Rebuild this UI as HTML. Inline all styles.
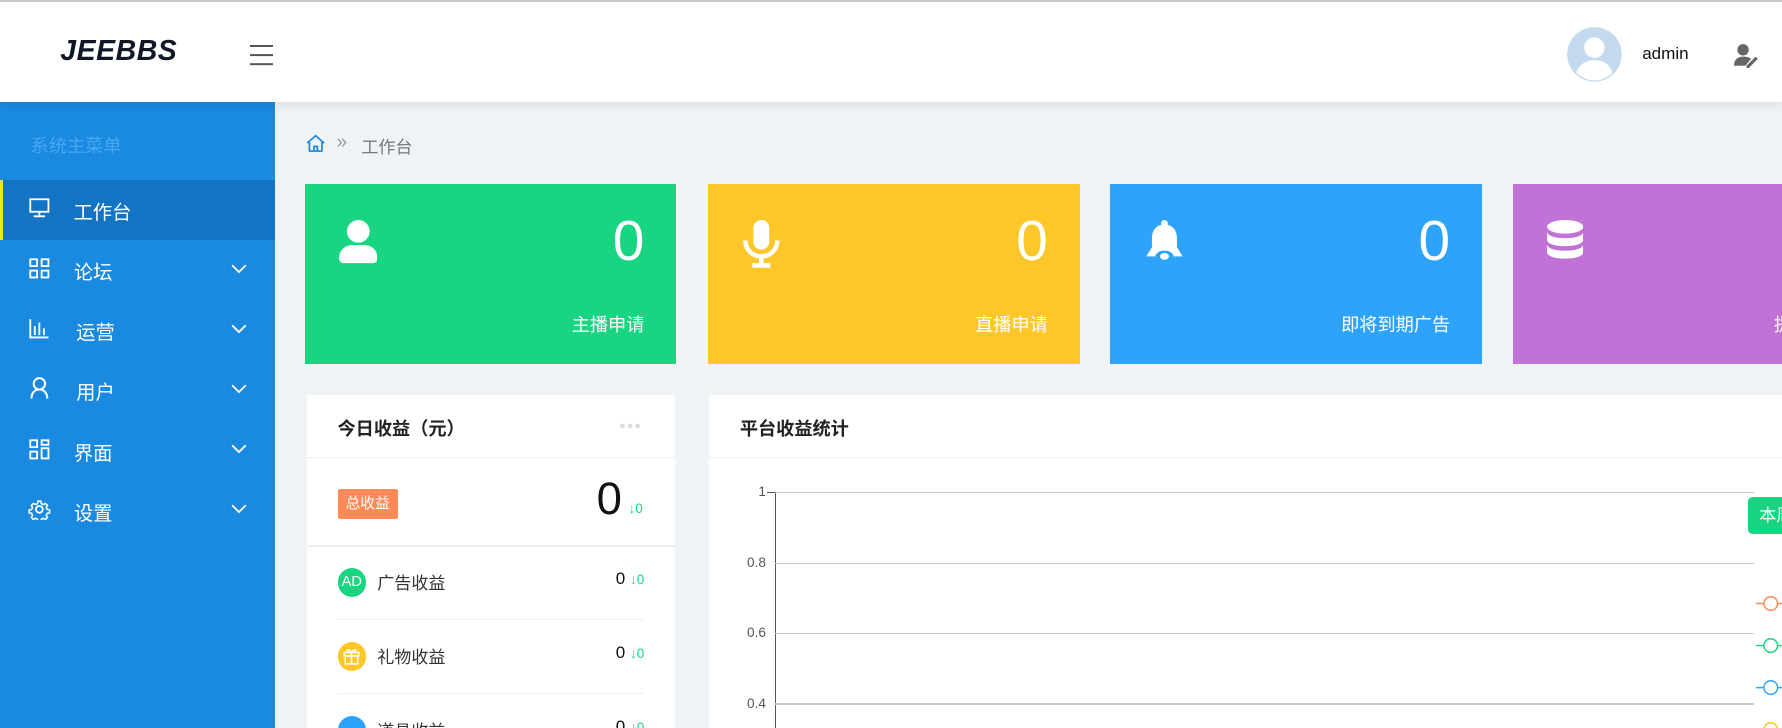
<!DOCTYPE html>
<html><head><meta charset="utf-8"><style>
*{margin:0;padding:0;box-sizing:border-box}
html,body{width:1782px;height:728px;overflow:hidden;background:#f0f3f6}
#w{zoom:1.13648;width:1568px;height:641px;position:relative;overflow:hidden;font-family:"Liberation Sans","Noto Sans CJK SC",sans-serif;background:#f0f3f6}
.a{position:absolute}
.hd{left:0;top:0;width:1568px;height:90px;background:#fff;border-top:2px solid #c8c8c8;box-shadow:0 2px 8px rgba(0,0,0,.1);z-index:2}
.sb{left:0;top:90px;width:242px;height:560px;background:#1a89e0}
.it{position:absolute;left:0;width:242px;height:53px;color:#fff;font-size:17px}
.it span{position:absolute;left:65px;top:15px}
.it svg.ic{position:absolute;left:25px;top:15px}
.it svg.ch{position:absolute;left:203px;top:20px}
.card{top:162px;width:327px;height:158px;color:#fff}
.card .n{position:absolute;right:28px;top:22px;font-size:50px;font-weight:300}
.card .l{position:absolute;right:28px;top:112px;font-size:16px}
.card svg{position:absolute;left:30px;top:32px}
.pn{background:#fff;top:348px;height:300px}
.ttl{position:absolute;top:17px;font-size:16px;font-weight:bold;color:#222}
.hr{position:absolute;height:1px;background:#eceff2}
.row{position:absolute;left:27px;width:270px;height:30px;font-size:15px;color:#333}
.row .c{position:absolute;left:0;top:0;width:25px;height:25px;border-radius:50%;color:#fff;font-size:13px;text-align:center;line-height:25px}
.row .t{position:absolute;left:35px;top:1px}
.row .v{position:absolute;right:0;top:1px;color:#111}
.row .v i{font-style:normal;color:#19d581;font-size:12px}
.yl{position:absolute;width:40px;text-align:right;font-size:12px;color:#555}
.gl{position:absolute;left:682px;width:861px;height:1px;background:#c8c8c8}
</style></head><body><div id="w">
<div class="a hd">
 <div class="a" style="left:53px;top:29px;font-size:25px;font-weight:bold;font-style:italic;color:#101828;letter-spacing:0.5px">JEEBBS</div>
 <div class="a" style="left:220px;top:38px;width:20px;height:2px;background:#555;box-shadow:0 8px 0 #555,0 16px 0 #555"></div>
 <svg class="a" style="left:1378px;top:21px" width="50" height="50" viewBox="0 0 50 50"><circle cx="25" cy="25" r="24" fill="#c2d9ee"/><circle cx="25" cy="19" r="9" fill="#fff"/><path d="M9 41c3-8 9-11 16-11s13 3 16 11c-4 4-10 7-16 7s-12-3-16-7z" fill="#fff"/></svg>
 <div class="a" style="left:1445px;top:37px;font-size:15px;color:#111">admin</div>
 <svg class="a" style="left:1526px;top:36px" width="22" height="22" viewBox="0 0 22 22"><circle cx="8" cy="6" r="5" fill="#666"/><path d="M0 20c0-6 4-8 8-8s6 1 7 2l-5 6z" fill="#666"/><path d="M11 20l8-8 2 2-8 8h-2z" fill="#666"/></svg>
</div>
<div class="a sb">
 <div class="a" style="left:27px;top:26px;font-size:16px;color:#46a8f5">系统主菜单</div>
 <div class="it" style="top:68px;background:#1474c4;border-left:3px solid #f5e12a">
  <svg class="ic" style="left:22px" width="20" height="20" viewBox="0 0 20 20" fill="none" stroke="#fff" stroke-width="1.6"><rect x="2" y="2" width="16" height="11"/><path d="M10 13v4M5 17h10"/></svg><span style="left:62px">工作台</span></div>
 <div class="it" style="top:121px"><svg class="ic" width="20" height="20" viewBox="0 0 20 20" fill="none" stroke="#fff" stroke-width="1.6"><rect x="2" y="2" width="6" height="6"/><rect x="12" y="2" width="6" height="6"/><rect x="2" y="12" width="6" height="6"/><rect x="12" y="12" width="6" height="6"/></svg><span>论坛</span><svg class="ch" width="14" height="10" viewBox="0 0 14 10" fill="none" stroke="#fff" stroke-width="1.6"><path d="M1 2l6 6 6-6"/></svg></div>
 <div class="it" style="top:174px"><svg class="ic" width="20" height="20" viewBox="0 0 20 20" fill="none" stroke="#fff" stroke-width="1.6"><path d="M2 2v16h16M6 8v8M10 5v11M14 10v6"/></svg><span style="left:67px">运营</span><svg class="ch" width="14" height="10" viewBox="0 0 14 10" fill="none" stroke="#fff" stroke-width="1.6"><path d="M1 2l6 6 6-6"/></svg></div>
 <div class="it" style="top:227px"><svg class="ic" width="20" height="20" viewBox="0 0 20 20" fill="none" stroke="#fff" stroke-width="1.8"><circle cx="10" cy="6" r="5"/><path d="M3 19c0-5 3-8 7-8s7 3 7 8"/></svg><span style="left:67px">用户</span><svg class="ch" width="14" height="10" viewBox="0 0 14 10" fill="none" stroke="#fff" stroke-width="1.6"><path d="M1 2l6 6 6-6"/></svg></div>
 <div class="it" style="top:280px"><svg class="ic" width="20" height="20" viewBox="0 0 20 20" fill="none" stroke="#fff" stroke-width="1.6"><rect x="2" y="2" width="6" height="6"/><rect x="12" y="2" width="6" height="4"/><rect x="2" y="12" width="6" height="6"/><rect x="12" y="9" width="6" height="9"/></svg><span>界面</span><svg class="ch" width="14" height="10" viewBox="0 0 14 10" fill="none" stroke="#fff" stroke-width="1.6"><path d="M1 2l6 6 6-6"/></svg></div>
 <div class="it" style="top:333px"><svg class="ic" width="20" height="20" viewBox="0 0 20 20" fill="none" stroke="#fff" stroke-width="1.6"><circle cx="10" cy="10" r="3"/><path d="M8.5 1.5h3l.5 2.5 2 1 2.3-1.2 2 2-1.2 2.3 1 2 2.5.5v3l-2.5.5-1 2 1.2 2.3-2 2-2.3-1.2-2 1-.5 2.5h-3l-.5-2.5-2-1-2.3 1.2-2-2 1.2-2.3-1-2-2.5-.5v-3l2.5-.5 1-2-1.2-2.3 2-2 2.3 1.2 2-1z" transform="scale(.85) translate(1.8 1.8)"/></svg><span>设置</span><svg class="ch" width="14" height="10" viewBox="0 0 14 10" fill="none" stroke="#fff" stroke-width="1.6"><path d="M1 2l6 6 6-6"/></svg></div>
</div>
<svg class="a" style="left:269px;top:118px" width="17" height="17" viewBox="0 0 17 17" fill="none" stroke="#1a89e0" stroke-width="1.5"><path d="M1 8L8.5 1.5 16 8M3 7v8h11V7M7 15v-4h3v4"/></svg>
<div class="a" style="left:296px;top:116px;font-size:17px;color:#999">»</div>
<div class="a" style="left:318px;top:117px;font-size:15px;color:#777">工作台</div>

<div class="a card" style="left:268px;background:#19d581"><svg width="34" height="38" viewBox="0 0 34 38" fill="#fff"><circle cx="17" cy="10" r="10"/><path d="M0 34c0-8 6-12 12-12h10c6 0 12 4 12 12 0 2-2 4-4 4H4c-2 0-4-2-4-4z"/></svg><div class="n">0</div><div class="l">主播申请</div></div>
<div class="a card" style="left:623px;background:#fdc72a"><svg width="34" height="42" viewBox="0 0 34 42" fill="none" stroke="#fff" stroke-width="4"><rect x="10" y="0" width="14" height="26" rx="7" fill="#fff" stroke="none"/><path d="M3 18c0 8 6 14 14 14s14-6 14-14M17 32v8M9 40h16"/></svg><div class="n">0</div><div class="l">直播申请</div></div>
<div class="a card" style="left:977px;background:#2ea3fb"><svg width="36" height="40" viewBox="0 0 36 40" fill="#fff"><circle cx="18" cy="3" r="3"/><path d="M18 4c-7 0-11 5-11 12v8L2 32h32l-5-8v-8c0-7-4-12-11-12z"/><ellipse cx="18" cy="32" rx="8" ry="5" fill="#2ea3fb"/><ellipse cx="18" cy="32" rx="4" ry="3"/></svg><div class="n">0</div><div class="l">即将到期广告</div></div>
<div class="a card" style="left:1331px;background:#c172d6"><svg width="32" height="40" viewBox="0 0 32 40" fill="#fff"><ellipse cx="16" cy="6" rx="16" ry="6"/><path d="M0 10c0 4 7 6 16 6s16-2 16-6v7c0 4-7 6-16 6S0 21 0 17z"/><path d="M0 21c0 4 7 6 16 6s16-2 16-6v7c0 4-7 6-16 6S0 32 0 28z"/></svg><div class="l" style="right:auto;left:230px">提</div></div>

<div class="a pn" style="left:270px;width:324px">
 <div class="ttl" style="left:27px">今日收益（元）</div>
 <div class="a" style="left:275px;top:18px;color:#ddd;font-size:16px;letter-spacing:1px">•••</div>
 <div class="hr" style="left:0;top:54px;width:324px"></div>
 <div class="a" style="left:27px;top:82px;width:53px;height:27px;background:#fd8a57;border-radius:2px;color:#fff;font-size:13px;text-align:center;line-height:27px">总收益</div>
 <div class="a" style="left:255px;top:68px;font-size:40px;color:#111">0</div>
 <div class="a" style="left:283px;top:93px;font-size:12px;color:#19d581">↓0</div>
 <div class="hr" style="left:0;top:132px;width:324px"></div>
 <div class="row" style="top:152px"><div class="c" style="background:#19d581">AD</div><div class="t">广告收益</div><div class="v">0 <i>↓0</i></div></div>
 <div class="hr" style="left:27px;top:197px;width:270px"></div>
 <div class="row" style="top:217px"><div class="c" style="background:#fdc72a"><svg width="15" height="15" viewBox="0 0 15 15" fill="none" stroke="#fff" stroke-width="1.3" style="margin-top:5px"><rect x="1" y="4" width="13" height="3"/><rect x="2" y="7" width="11" height="7"/><path d="M7.5 4v10M7.5 4C5 0 2 2 5 4M7.5 4C10 0 13 2 10 4"/></svg></div><div class="t">礼物收益</div><div class="v">0 <i>↓0</i></div></div>
 <div class="hr" style="left:27px;top:262px;width:270px"></div>
 <div class="row" style="top:282px"><div class="c" style="background:#2ea3fb"></div><div class="t">道具收益</div><div class="v">0 <i>↓0</i></div></div>
</div>

<div class="a pn" style="left:624px;width:944px">
 <div class="ttl" style="left:27px">平台收益统计</div>
 <div class="hr" style="left:0;top:54px;width:944px"></div>
</div>
<div class="a" style="left:682px;top:433px;width:1px;height:210px;background:#555"></div>
<div class="gl" style="top:433px"></div><div class="gl" style="top:495px"></div><div class="gl" style="top:557px"></div><div class="gl" style="top:619px"></div>
<div class="yl" style="left:634px;top:426px">1</div>
<div class="yl" style="left:634px;top:488px">0.8</div>
<div class="yl" style="left:634px;top:550px">0.6</div>
<div class="yl" style="left:634px;top:612px">0.4</div>
<div class="a" style="left:675px;top:433px;width:7px;height:1px;background:#555"></div>
<div class="a" style="left:1538px;top:437px;width:40px;height:33px;background:#19d581;border-radius:4px;color:#fff;font-size:15px;line-height:33px;padding-left:10px">本周</div>
<svg class="a" style="left:1545px;top:520px" width="23" height="130" viewBox="0 0 23 130" fill="#fff" stroke-width="1.3"><g stroke="#fd8a57"><path d="M0 11h23"/><circle cx="13" cy="11" r="6"/></g><g stroke="#19d581"><path d="M0 48h23"/><circle cx="13" cy="48" r="6"/></g><g stroke="#2ea3fb"><path d="M0 85h23"/><circle cx="13" cy="85" r="6"/></g><g stroke="#fdc72a"><circle cx="13" cy="122" r="6"/></g></svg>
</div></body></html>
